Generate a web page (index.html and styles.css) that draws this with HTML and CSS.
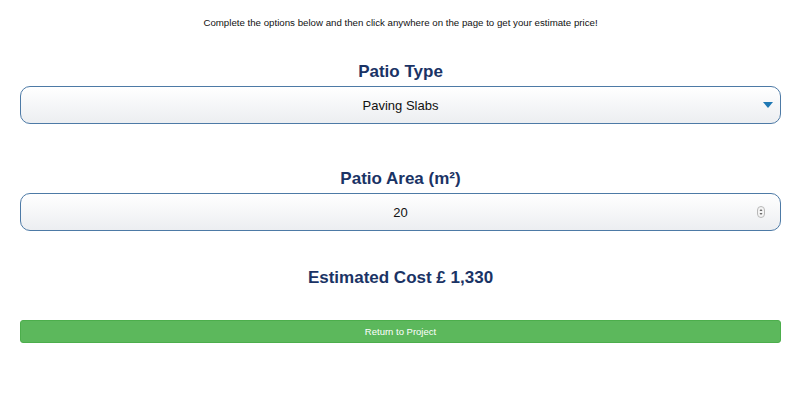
FILE: index.html
```html
<!DOCTYPE html>
<html lang="en">
<head>
    <meta charset="UTF-8">
    <meta name="viewport" content="width=device-width, initial-scale=1.0">
    <title>Patio Estimate</title>
    <link rel="stylesheet" href="styles.css">
</head>
<body>
    <div class="container">
        <p class="intro">Complete the options below and then click anywhere on the page to get your estimate price!</p>

        <h2>Patio Type</h2>
        <div class="field">
            <select class="control">
                <option>Paving Slabs</option>
                <option>Block Paving</option>
                <option>Natural Stone</option>
            </select>
            <svg class="arrow" width="10" height="6" viewBox="0 0 10 6"><path d="M0 0 H10 L5 6 Z" fill="#1f78b4"/></svg>
        </div>

        <h2 class="area-title">Patio Area (m²)</h2>
        <div class="field">
            <input class="control" type="text" value="20">
            <svg class="spinner" width="8" height="12" viewBox="0 0 8 12">
                <rect x="0.5" y="0.5" width="7" height="11" rx="3.5" fill="#f4f4f4" stroke="#b8b8b8"/>
                <path d="M2.5 5 L4 3 L5.5 5 Z M2.5 7 L4 9 L5.5 7 Z" fill="#666"/>
            </svg>
        </div>

        <h2 class="cost">Estimated Cost £ 1,330</h2>

        <a class="return-btn" href="#">Return to Project</a>
    </div>
</body>
</html>
```

FILE: styles.css
```css
body {
    margin: 0;
    background-color: white;
    font-family: "Liberation Sans", Arial, sans-serif;
}

.container {
    padding: 0 19px 0 20px;
    text-align: center;
}

.intro {
    font-size: 9.7px;
    color: #111;
    margin: 0;
    padding-top: 16px;
    line-height: 14px;
}

h2 {
    font-size: 17px;
    font-weight: bold;
    color: #1a3365;
    margin: 31px 0 3px;
    line-height: 22px;
}

.area-title {
    margin-top: 44px;
}

.field {
    position: relative;
}

.control {
    display: block;
    width: 100%;
    height: 38px;
    box-sizing: border-box;
    border: 1px solid #4d7aa6;
    border-radius: 10px;
    background: linear-gradient(#ffffff, #eceef1);
    font-family: "Liberation Sans", Arial, sans-serif;
    font-size: 13px;
    color: #111;
    text-align: center;
    text-align-last: center;
    appearance: none;
    -webkit-appearance: none;
    outline: none;
    padding: 0 30px;
}

.arrow {
    position: absolute;
    right: 8px;
    top: 16px;
}

.spinner {
    position: absolute;
    right: 16px;
    top: 13px;
}

.cost {
    margin-top: 36px;
    margin-bottom: 31px;
}

.return-btn {
    display: block;
    background-color: #5cb85c;
    border: 1px solid #4cae4c;
    border-radius: 3px;
    color: white;
    font-size: 9.5px;
    line-height: 21px;
    text-decoration: none;
}
```
